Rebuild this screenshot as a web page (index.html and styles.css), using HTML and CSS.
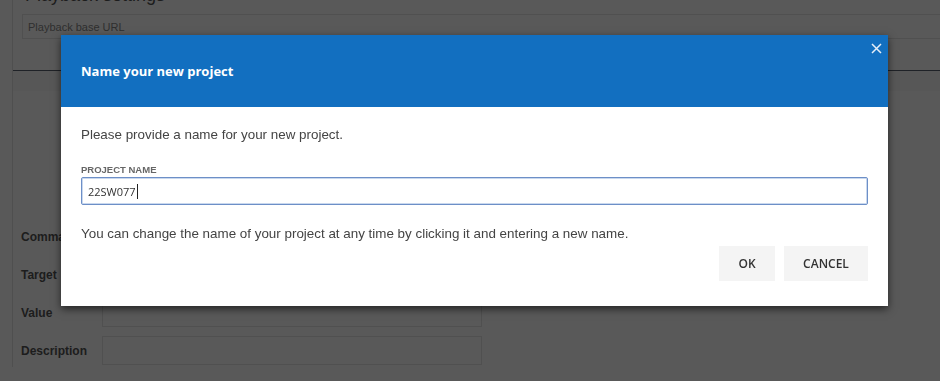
FILE: index.html
```html
<!DOCTYPE html>
<html lang="en">
<head>
    <meta charset="UTF-8">
    <meta name="viewport" content="width=device-width, initial-scale=1.0">
    <title>Name your new project</title>
    <link rel="stylesheet" href="styles.css">
</head>
<body>
    <div class="panel">
        <div class="panel-title">Playback settings</div>
        <div class="url-row">
            <input class="url-input" type="text" placeholder="Playback base URL">
        </div>
        <div class="tabs"></div>
        <div class="editor">
            <div class="field">
                <label>Command</label>
                <input type="text">
            </div>
            <div class="field">
                <label>Target</label>
                <input type="text">
            </div>
            <div class="field">
                <label>Value</label>
                <input type="text">
            </div>
            <div class="field">
                <label>Description</label>
                <input type="text">
            </div>
        </div>
    </div>

    <div class="overlay"></div>

    <div class="dialog">
        <div class="dialog-header">
            <h2>Name your new project</h2>
            <button type="button" class="close" aria-label="Close">
                <svg width="11" height="11" viewBox="0 0 11 11">
                    <path d="M1 1L10 10M10 1L1 10" stroke="#e6eef8" stroke-width="1.5" fill="none"/>
                </svg>
            </button>
        </div>
        <div class="dialog-body">
            <p>Please provide a name for your new project.</p>
            <label class="small-label" for="projectName">PROJECT NAME</label>
            <div class="name-input">
                <span id="projectName">22SW077</span><span class="caret"></span>
            </div>
            <p class="hint">You can change the name of your project at any time by clicking it and entering a new name.</p>
            <div class="actions">
                <button type="button" class="btn">OK</button>
                <button type="button" class="btn">CANCEL</button>
            </div>
        </div>
    </div>
</body>
</html>
```

FILE: styles.css
```css
html, body {
    margin: 0;
    padding: 0;
    height: 100%;
    overflow: hidden;
}
body {
    font-family: "Liberation Sans", Arial, sans-serif;
    background: #fff;
    color: #333;
}
.panel {
    margin-left: 12px;
    border-left: 1px solid #e2e2e2;
    height: 100%;
}
.panel-title {
    margin-top: -14px;
    padding-left: 12px;
    font-size: 18px;
    line-height: 18px;
    color: #555;
}
.url-row {
    padding: 10px 0 0 9px;
}
.url-input {
    box-sizing: border-box;
    width: 930px;
    height: 25px;
    border: 1px solid #e4e4e4;
    padding: 0 5px;
    font-family: "Liberation Sans", Arial, sans-serif;
    font-size: 11px;
    color: #777;
}
.url-input::placeholder {
    color: #888;
}
.tabs {
    margin-top: 31px;
    border-top: 1px solid #5a6270;
    height: 20px;
    background: #f8f8f8;
}
.editor {
    padding-top: 131px;
    padding-left: 8px;
    display: grid;
    row-gap: 9px;
}
.field {
    display: flex;
    align-items: center;
}
.field label {
    width: 81px;
    font-size: 12px;
    font-weight: bold;
    color: #555;
}
.field input {
    box-sizing: border-box;
    width: 380px;
    height: 29px;
    border: 1px solid #e6e6e6;
}
.overlay {
    position: fixed;
    inset: 0;
    background: rgba(0, 0, 0, 0.65);
}
.dialog {
    position: absolute;
    top: 35px;
    left: 61px;
    width: 827px;
    background: #fff;
    box-shadow: 0 3px 8px rgba(0, 0, 0, 0.6);
}
.dialog-header {
    height: 72px;
    background: #126fc0;
    display: flex;
    align-items: center;
    padding: 0 20px;
    position: relative;
}
.dialog-header h2 {
    margin: 0;
    font-family: "Open Sans", sans-serif;
    font-size: 13px;
    font-weight: bold;
    color: #fff;
}
.close {
    position: absolute;
    top: 8px;
    right: 6px;
    background: none;
    border: none;
    padding: 0;
    width: 11px;
    height: 11px;
    display: flex;
}
.dialog-body {
    padding: 19px 20px 25px 20px;
}
.dialog-body p {
    margin: 0;
    font-size: 13.4px;
    line-height: 17px;
    color: #444;
}
.small-label {
    display: block;
    margin-top: 21px;
    font-size: 9.5px;
    font-weight: bold;
    color: #666;
    line-height: 11px;
}
.name-input {
    box-sizing: border-box;
    margin-top: 2px;
    height: 28px;
    border: 1px solid #6d8fc7;
    border-radius: 2px;
    box-shadow: inset 0 0 0 1px #c9d8ee;
    padding: 0 6px;
    display: flex;
    align-items: center;
    font-family: "Open Sans", sans-serif;
    font-size: 11px;
    color: #333;
}
.caret {
    display: inline-block;
    width: 1px;
    height: 15px;
    background: #222;
    margin-left: 1px;
}
.hint {
    margin-top: 20px !important;
}
.actions {
    display: flex;
    justify-content: flex-end;
    gap: 9px;
    margin-top: 4px;
}
.btn {
    height: 35px;
    border: none;
    background: #f4f4f4;
    font-family: "Open Sans", sans-serif;
    font-size: 12px;
    font-weight: 600;
    color: #333;
    padding: 0;
    cursor: pointer;
}
.btn:first-child {
    width: 56px;
}
.btn:last-child {
    width: 84px;
}
```
